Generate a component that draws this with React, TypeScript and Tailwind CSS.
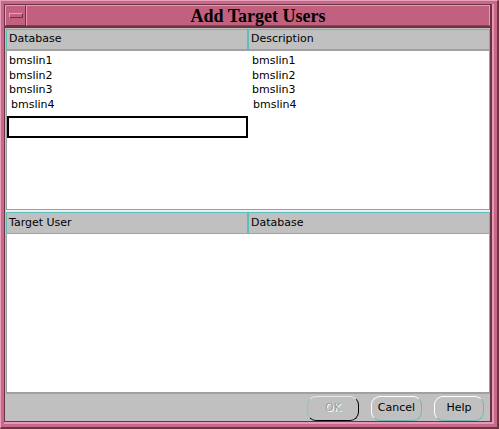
const rows = [
  { db: "bmslin1", desc: "bmslin1" },
  { db: "bmslin2", desc: "bmslin2" },
  { db: "bmslin3", desc: "bmslin3" },
  { db: "bmslin4", desc: "bmslin4" },
];

function HeaderCell({ label, wide }: { label: string; wide?: boolean }) {
  return (
    <div
      className={
        "flex items-center border border-[#5ebdbd] bg-[#c0c0c0] pl-[2px] text-[11px] text-black " +
        (wide ? "flex-1" : "w-[242px]")
      }
    >
      {label}
    </div>
  );
}

function Button({ label, disabled, isDefault }: { label: string; disabled?: boolean; isDefault?: boolean }) {
  return (
    <button
      className={
        "h-[25px] rounded-[9px] bg-[#c0c0c0] text-[11px] flex items-center justify-center " +
        (isDefault
          ? "w-[52px] border border-t-[#e8e8e8] border-l-[#7fc9c9] border-r-black border-b-black text-[#a0a0a0] [text-shadow:1px_1px_0_#ffffff]"
          : "border border-t-white border-l-white border-r-[#6fb8b8] border-b-[#6fb8b8] text-black") +
        (label === "Cancel" ? " w-[51px]" : label === "Help" ? " w-[50px]" : "")
      }
      disabled={disabled}
    >
      {label}
    </button>
  );
}

export default function App() {
  return (
    <div className="w-[499px] h-[429px] flex bg-[#c8688a] border-t border-l border-t-[#e8a0bc] border-l-[#e8a0bc] border-r-2 border-b-2 border-r-[#6b3540] border-b-[#6b3540] p-[3px] font-['DejaVu_Sans',sans-serif]">
      <div className="flex-1 flex border-r-2 border-b-2 border-[#e49ab6]">
        <div className="flex-1 flex flex-col border-l border-t border-r-2 border-b border-[#6b3540] bg-[#c0c0c0]">
          {/* title bar */}
          <div className="h-[21px] flex">
            <div className="w-[21px] flex items-center justify-center bg-[#c1617f] border border-t-[#e8a0bc] border-l-[#e8a0bc] border-r-[#6b3540] border-b-[#6b3540]">
              <div className="w-[14px] h-[5px] bg-[#c1617f] border border-t-[#e8a0bc] border-l-[#e8a0bc] border-r-[#6b3540] border-b-[#6b3540]" />
            </div>
            <div className="flex-1 flex items-center justify-center bg-[#c1617f] border border-t-[#e49ab6] border-l-[#e49ab6] border-r-[#e49ab6] border-b-[#8a4456] font-['Liberation_Serif',serif] font-bold text-[18px] text-black leading-none">
              Add Target Users
            </div>
          </div>
          <div className="h-[2px] bg-[#6b3540]" />

          {/* body */}
          <div className="flex-1 flex flex-col pt-[1px] pl-[1px]">
            <div className="h-[21px] flex">
              <HeaderCell label="Database" />
              <HeaderCell label="Description" wide />
            </div>
            <div className="h-[160px] bg-white border border-[#a0a0a0] grid grid-cols-[241px_1fr] content-start pt-[3px] text-[11px] leading-[14.5px] text-black">
              {rows.map((r, i) => (
                <div key={r.db} className="contents">
                  <div className={i === 3 ? "pl-[4px]" : "pl-[2px]"}>{r.db}</div>
                  <div className={i === 3 ? "pl-[5px]" : "pl-[4px]"}>{r.desc}</div>
                </div>
              ))}
              <input className="mt-[4px] h-[22px] w-[241px] border-2 border-black bg-white outline-none" />
            </div>
            <div className="h-[2px] bg-[#ececec]" />
            <div className="h-[22px] flex">
              <HeaderCell label="Target User" />
              <HeaderCell label="Database" wide />
            </div>
            <div className="h-[159px] bg-white border-l border-r border-b border-[#a0a0a0]" />
            <div className="h-[1px] bg-[#5ebdbd]" />
            <div className="flex-1 flex justify-end items-start gap-[12px] pt-[2px] pr-[6px]">
              <Button label="OK" disabled isDefault />
              <Button label="Cancel" />
              <Button label="Help" />
            </div>
          </div>
        </div>
      </div>
    </div>
  );
}
